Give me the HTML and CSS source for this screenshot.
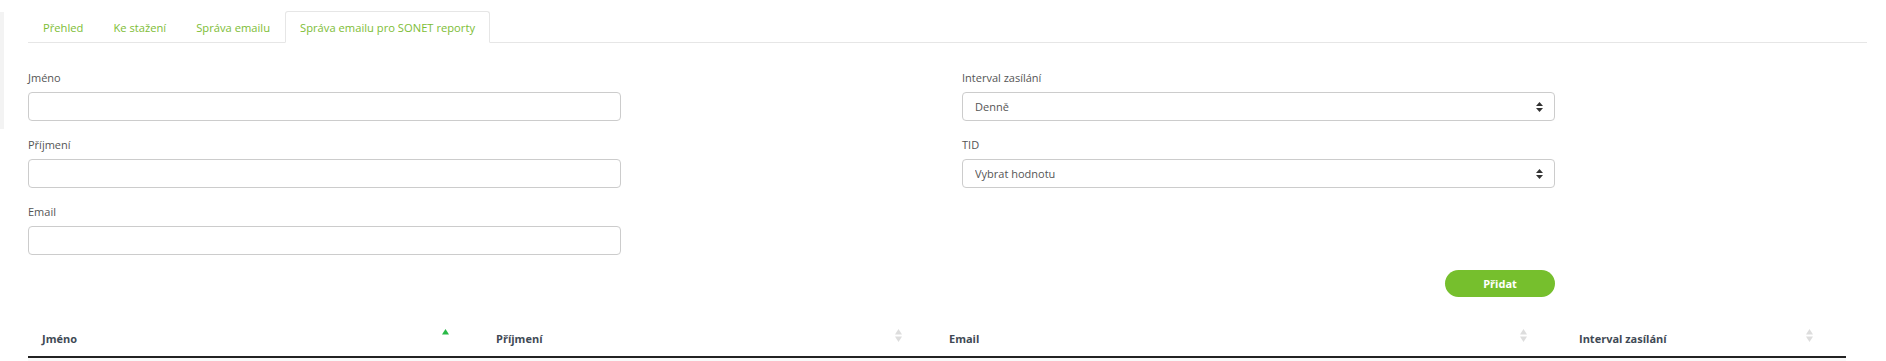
FILE: index.html
```html
<!DOCTYPE html>
<html lang="cs">
<head>
  <meta charset="UTF-8">
  <meta name="viewport" content="width=device-width, initial-scale=1.0">
  <title>Správa emailu pro SONET reporty</title>
  <link rel="stylesheet" href="styles.css">
</head>
<body>
  <div class="page">
    <div class="sidebar"></div>
    <div class="main">
      <ul class="tabs">
        <li><a href="#">Přehled</a></li>
        <li><a href="#">Ke stažení</a></li>
        <li><a href="#">Správa emailu</a></li>
        <li class="active"><a href="#">Správa emailu pro SONET reporty</a></li>
      </ul>

      <form class="form">
        <div class="col">
          <div class="field">
            <label for="jmeno">Jméno</label>
            <input type="text" id="jmeno">
          </div>
          <div class="field">
            <label for="prijmeni">Příjmení</label>
            <input type="text" id="prijmeni">
          </div>
          <div class="field">
            <label for="email">Email</label>
            <input type="text" id="email">
          </div>
        </div>
        <div class="col">
          <div class="field">
            <label for="interval">Interval zasílání</label>
            <select id="interval">
              <option>Denně</option>
              <option>Týdně</option>
              <option>Měsíčně</option>
            </select>
          </div>
          <div class="field">
            <label for="tid">TID</label>
            <select id="tid">
              <option>Vybrat hodnotu</option>
            </select>
          </div>
          <div class="actions">
            <button type="button" class="btn">Přidat</button>
          </div>
        </div>
      </form>

      <table class="grid">
        <thead>
          <tr>
            <th class="c1"><span>Jméno</span><i class="sort asc"></i></th>
            <th class="c2"><span>Příjmení</span><i class="sort"></i></th>
            <th class="c3"><span>Email</span><i class="sort"></i></th>
            <th class="c4"><span>Interval zasílání</span><i class="sort"></i></th>
          </tr>
        </thead>
        <tbody>
          <tr><td colspan="4"></td></tr>
        </tbody>
      </table>
    </div>
  </div>
</body>
</html>
```

FILE: styles.css
```css
body {
  margin: 0;
  font-family: "Open Sans", "Liberation Sans", sans-serif;
  font-size: 11px;
  color: #555;
  background: #fff;
}
.page {
  display: flex;
  align-items: flex-start;
}
.sidebar {
  width: 4px;
  height: 117px;
  margin-top: 12px;
  background: #f3f3f3;
}
.main {
  flex: 1;
  padding: 11px 19px 0 24px;
}

/* tabs */
.tabs {
  display: flex;
  list-style: none;
  margin: 0;
  padding: 0;
  border-bottom: 1px solid #e6e6e6;
}
.tabs li {
  margin-bottom: -1px;
}
.tabs a {
  display: block;
  height: 30px;
  line-height: 31px;
  padding: 0 14px;
  border: 1px solid transparent;
  border-radius: 3px 3px 0 0;
  color: #7dbd35;
  font-size: 11.2px;
  text-decoration: none;
}
.tabs .active a {
  border-color: #e6e6e6;
  border-bottom-color: #fff;
  background: #fff;
}

/* form */
.form {
  display: grid;
  grid-template-columns: 593px 593px;
  column-gap: 341px;
  margin-top: 27px;
}
.field {
  display: flex;
  flex-direction: column;
  margin-bottom: 16px;
}
.field label {
  line-height: 15px;
  margin-bottom: 7px;
  color: #555;
}
.field input,
.field select {
  box-sizing: border-box;
  height: 29px;
  width: 100%;
  border: 1px solid #ccc;
  border-radius: 4px;
  font-family: inherit;
  font-size: 11px;
  color: #555;
  background-color: #fff;
  padding: 0 12px;
  outline: none;
}
.field select {
  appearance: none;
  -webkit-appearance: none;
  background-image: url("data:image/svg+xml;utf8,<svg xmlns='http://www.w3.org/2000/svg' width='7' height='10' viewBox='0 0 7 10'><path d='M3.5 0L7 4H0z M0 6h7L3.5 10z' fill='%23333'/></svg>");
  background-repeat: no-repeat;
  background-position: right 11px center;
}
.actions {
  display: flex;
  justify-content: flex-end;
  margin-top: 82px;
}
.btn {
  width: 110px;
  height: 27px;
  border: none;
  border-radius: 14px;
  background: #76bf2d;
  color: #fff;
  font-family: inherit;
  font-size: 11px;
  font-weight: bold;
  cursor: pointer;
}

/* table */
.grid {
  width: 1818px;
  border-collapse: collapse;
  margin-top: 17px;
}
.grid th {
  position: relative;
  box-sizing: border-box;
  height: 43px;
  padding: 0 14px;
  text-align: left;
  font-size: 11px;
  font-weight: bold;
  color: #3f4a55;
  border-bottom: 2px solid #222;
  vertical-align: middle;
}
.grid th span {
  position: relative;
  top: 3px;
}
.grid .c1 { width: 454px; }
.grid .c2 { width: 453px; }
.grid .c3 { width: 630px; }
.grid .c4 { width: 281px; }
.sort {
  position: absolute;
  top: 15px;
  right: 33px;
  width: 7px;
  height: 13px;
  background-image: url("data:image/svg+xml;utf8,<svg xmlns='http://www.w3.org/2000/svg' width='7' height='13' viewBox='0 0 7 13'><path d='M3.5 0L7 5.5H0z' fill='%23ddd'/><path d='M0 7.5h7L3.5 13z' fill='%23ddd'/></svg>");
}
.sort.asc {
  background-image: url("data:image/svg+xml;utf8,<svg xmlns='http://www.w3.org/2000/svg' width='7' height='13' viewBox='0 0 7 13'><path d='M3.5 0L7 5.5H0z' fill='%2328b946'/></svg>");
}
.c3 .sort { right: 38px; }
.grid td {
  height: 20px;
  background: #f9f9f9;
}
```
